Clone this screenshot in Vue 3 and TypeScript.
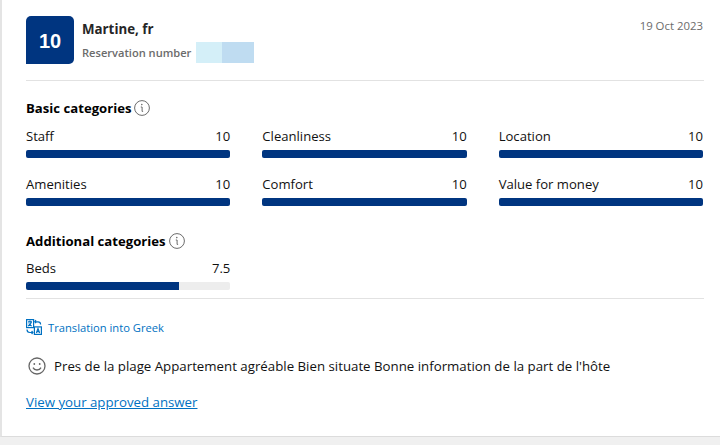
<template>
  <div class="page">
    <div class="review-card">
      <div class="review-head">
        <div class="score-badge">10</div>
        <div class="guest">
          <div class="guest-name">Martine, fr</div>
          <div class="reservation">
            <span>Reservation number</span>
            <span class="redacted"><i class="light"></i><i class="dark"></i></span>
          </div>
        </div>
        <div class="review-date">19 Oct 2023</div>
      </div>

      <div class="section">
        <h3 class="section-title">
          Basic categories
          <svg class="info" viewBox="0 0 16 16" width="16" height="16">
            <circle cx="8" cy="8" r="7.4" fill="none" stroke="#6b6b6b" stroke-width="1" />
            <circle cx="7.8" cy="4.6" r="0.8" fill="#6b6b6b" />
            <path d="M6.8 7h1.300v4.400h1" fill="none" stroke="#6b6b6b" stroke-width="1" />
          </svg>
        </h3>
        <div class="score-grid">
          <div v-for="item in basicScores" :key="item.label" class="score-item">
            <div class="score-row">
              <span>{{ item.label }}</span>
              <span>{{ item.value }}</span>
            </div>
            <div class="bar"><div class="bar-fill" :style="{ width: item.value * 10 + '%' }"></div></div>
          </div>
        </div>
      </div>

      <div class="section additional">
        <h3 class="section-title">
          Additional categories
          <svg class="info" viewBox="0 0 16 16" width="16" height="16">
            <circle cx="8" cy="8" r="7.4" fill="none" stroke="#6b6b6b" stroke-width="1" />
            <circle cx="7.8" cy="4.6" r="0.8" fill="#6b6b6b" />
            <path d="M6.8 7h1.300v4.400h1" fill="none" stroke="#6b6b6b" stroke-width="1" />
          </svg>
        </h3>
        <div class="score-grid">
          <div v-for="item in extraScores" :key="item.label" class="score-item">
            <div class="score-row">
              <span>{{ item.label }}</span>
              <span>{{ item.value }}</span>
            </div>
            <div class="bar"><div class="bar-fill" :style="{ width: item.value * 10 + '%' }"></div></div>
          </div>
        </div>
      </div>

      <div class="review-body">
        <a class="translate" href="#">
          <svg viewBox="0 0 16 16" width="16" height="16" fill="none" stroke="#0071c2" stroke-width="1.200">
            <rect x="0.6" y="0.6" width="7" height="8" />
            <path d="M2 2.800h4M4 1.600v1.200M5.400 2.800c-.4 2-1.600 3.400-3.400 4.200M2.800 4.400c.6 1.200 1.600 2 2.900 2.600" />
            <rect x="8.400" y="7.900" width="7" height="7.500" />
            <path d="M10.400 14l1.600-4.400 1.600 4.400M11 12.600h2" />
            <path d="M10 1.200l-1.200 1.600 1.200 1.400M9 2.800h3c1.600 0 2.600 1 2.600 2.600" />
            <path d="M1 10.600c0 1.800 1.100 2.900 2.800 2.900h3M5.600 12l1.300 1.500-1.300 1.500" />
          </svg>
          <span>Translation into Greek</span>
        </a>
        <div class="comment">
          <svg viewBox="0 0 18 18" width="18" height="18" fill="none" stroke="#666" stroke-width="1.300">
            <circle cx="9" cy="9" r="8" />
            <circle cx="6.300" cy="7" r="0.900" fill="#666" stroke="none" />
            <circle cx="11.700" cy="7" r="0.900" fill="#666" stroke="none" />
            <path d="M5 10.600c.8 1.600 2.200 2.400 4 2.400s3.200-.8 4-2.400" />
          </svg>
          <span>Pres de la plage Appartement agréable Bien situate Bonne information de la part de l'hôte</span>
        </div>
        <a class="answer-link" href="#">View your approved answer</a>
      </div>
    </div>
  </div>
</template>

<script setup lang="ts">
interface Score {
  label: string
  value: number
}

const basicScores: Score[] = [
  { label: 'Staff', value: 10 },
  { label: 'Cleanliness', value: 10 },
  { label: 'Location', value: 10 },
  { label: 'Amenities', value: 10 },
  { label: 'Comfort', value: 10 },
  { label: 'Value for money', value: 10 }
]

const extraScores: Score[] = [{ label: 'Beds', value: 7.5 }]
</script>

<style>
body {
  margin: 0;
  background: #f0f0f0;
}
</style>

<style scoped>
.page {
  height: 445px;
  overflow: hidden;
  font-family: "Open Sans", "Noto Sans", sans-serif;
  font-size: 13.1px;
  color: #1a1a1a;
}

.review-card {
  box-sizing: border-box;
  height: 437px;
  padding: 16px 16px 0 24px;
  background: #fff;
  border-left: 2px solid #e4e4e4;
  border-bottom: 1px solid #dcdcdc;
}

.review-head {
  display: flex;
  height: 64px;
  border-bottom: 1px solid #e2e2e2;
}

.score-badge {
  display: flex;
  align-items: center;
  justify-content: center;
  box-sizing: border-box;
  width: 48px;
  height: 48px;
  padding-top: 2px;
  border-radius: 5px 5px 5px 0;
  background: #003580;
  color: #fff;
  font-family: "Liberation Sans", sans-serif;
  font-size: 20px;
  font-weight: 700;
}

.guest {
  flex: 1;
  margin-left: 8px;
}

.guest-name {
  margin-top: 4px;
  line-height: 18px;
  font-size: 13.3px;
  font-weight: 700;
  color: #262626;
}

.reservation {
  display: flex;
  align-items: center;
  height: 22px;
  margin-top: 3px;
  font-size: 11.1px;
  font-weight: 600;
  color: #6b6b6b;
}

.redacted {
  display: flex;
  height: 21px;
  margin-left: 5px;
}

.redacted i {
  display: block;
  height: 100%;
}

.redacted .light {
  width: 26px;
  background: #d4eff8;
}

.redacted .dark {
  width: 32px;
  background: #bfdcf1;
}

.review-date {
  margin-top: 2px;
  margin-right: 1px;
  line-height: 16px;
  font-size: 11.4px;
  color: #6b6b6b;
}

.section {
  margin-top: 17px;
}

.section.additional {
  margin-top: 25px;
  padding-bottom: 8px;
  border-bottom: 1px solid #e2e2e2;
}

.section-title {
  display: flex;
  align-items: center;
  gap: 3px;
  height: 20px;
  margin: 0 0 8px;
  font-size: 13.15px;
  font-weight: 700;
  color: #000;
}

.additional .section-title {
  margin-bottom: 7px;
}

.score-grid {
  display: grid;
  grid-template-columns: repeat(3, 1fr);
  column-gap: 32px;
  row-gap: 16px;
  padding-right: 1px;
}

.score-row {
  display: flex;
  justify-content: space-between;
  height: 20px;
  line-height: 20px;
  margin-bottom: 4px;
  color: #111;
}

.bar {
  height: 8px;
  border-radius: 2px;
  background: #ededed;
  overflow: hidden;
}

.bar-fill {
  height: 100%;
  background: #003580;
}

.review-body {
  padding-top: 19px;
}

.translate {
  display: flex;
  align-items: center;
  gap: 6px;
  height: 18px;
  font-size: 11.2px;
  color: #0071c2;
  text-decoration: none;
}

.comment {
  display: flex;
  align-items: center;
  gap: 8px;
  margin-top: 20px;
  padding-left: 2px;
  height: 20px;
  font-size: 13.28px;
  color: #111;
}

.answer-link {
  display: inline-block;
  margin-top: 16px;
  line-height: 20px;
  font-size: 13.25px;
  color: #0071c2;
}
</style>
